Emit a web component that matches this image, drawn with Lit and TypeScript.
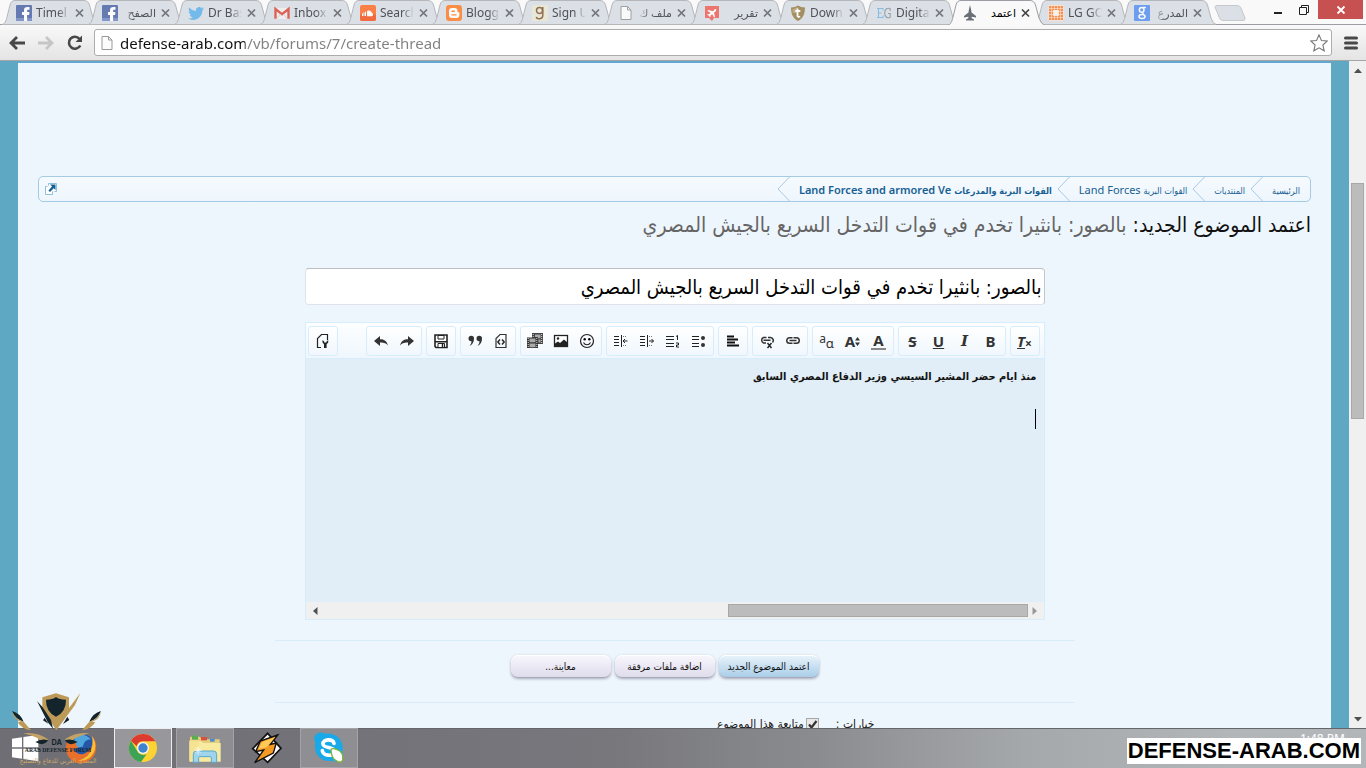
import { LitElement, html, svg, css, nothing } from "lit";
import { customElement, state } from "lit/decorators.js";
import { classMap } from "lit/directives/class-map.js";

const ic = (body: unknown, box = "0 0 16 16") => html`<svg class="ic" viewBox=${box} aria-hidden="true">${body}</svg>`;

const facebook = svg`<rect width="16" height="16" rx="1" fill="#5a70ad"/><rect y="13" width="16" height="3" fill="#7c90c5"/><path d="M8 16V10H6V7h2V5.400C8 3 9.200 2 11.400 2H13.500v2.700h-1.400c-.8 0-1 .4-1 1.100V7h2.300l-.3 3h-2v6z" fill="#fff"/>`;
const twitter = svg`<path d="M16 3.600c-.6.3-1.200.4-1.900.5.700-.4 1.200-1 1.400-1.800-.6.4-1.300.6-2 .8A3.200 3.200 0 0 0 8 6C5.200 5.900 2.800 4.600 1.200 2.600c-.9 1.500-.4 3.400 1 4.400-.5 0-1-.2-1.500-.4 0 1.600 1.100 2.900 2.600 3.200-.5.1-1 .2-1.500.1.400 1.300 1.600 2.200 3.100 2.300A6.600 6.600 0 0 1 0 13.500C5.800 17 14.400 13.700 14.400 5.300c.6-.5 1.200-1 1.600-1.700z" fill="#68b5ea"/>`;
const gmail = svg`<rect x="1" y="3" width="14" height="11" fill="#f2efef"/><path d="M1.500 13.800V4L8 9.200 14.500 4v9.800" fill="none" stroke="#dd5548" stroke-width="2.400"/><path d="M3 13.500 6.500 9M13 13.500 9.500 9" stroke="#d5cfcf"/>`;
const cloud = svg`<rect width="16" height="16" rx="2" fill="#ff7638"/><rect y="9" width="16" height="7" rx="2" fill="#f55f2c"/><path d="M7 11V6a3.200 3.200 0 0 1 5 2 1.700 1.700 0 0 1 0 3.200H7z" fill="#fff"/><path d="M2.500 8.500V11M4 7.500V11M5.500 6.800V11" stroke="#fff" stroke-width="1"/>`;
const blogger = svg`<rect width="16" height="16" rx="3" fill="#ff8636"/><path d="M3 6a3 3 0 0 1 3-3h2.500a3 3 0 0 1 3 3c0 1 .3 1.200 1 1.200s.9.400.9 1V10a3 3 0 0 1-3 3H6a3 3 0 0 1-3-3z" fill="#fff"/><path d="M6 6.200h2.300M6 9.900h4" stroke="#ff8636" stroke-width="1.400" stroke-linecap="round"/>`;
const goodreads = svg`<rect width="16" height="16" fill="#ebe8d6"/><circle cx="7.500" cy="5.500" r="3" fill="none" stroke="#8b6544" stroke-width="1.500"/><path d="M10.800 2v8.500c0 4-6 4-6.500 1.300" fill="none" stroke="#8b6544" stroke-width="1.500"/>`;
const page = svg`<path d="M3 1.500h6.500L13 5v9.500H3z" fill="#fcfcfc" stroke="#999"/><path d="M9.500 1.500V5H13" fill="none" stroke="#999"/>`;
const plane = svg`<path d="M1 1h14v12h-5l-2 3-3-3H1z" fill="#f06a62"/><path d="M4 5l5 1.300L11 4l1.300.2L12 6l-2 1.700L11 12l-1 .5-1.700-3.300-1.800 1.200V12l-.8.300L5 10.700 3.200 10l.3-.8H5L6.500 7.800 3.500 6z" fill="#fff"/>`;
const torrent = svg`<path d="M1 2.500C4 2.500 6 1.500 8 .5c2 1 4 2 7 2C15 9 13 13.500 8 16 3 13.500 1 9 1 2.500z" fill="#9d8754"/><path d="M2.500 4C5 3.600 6.500 2.800 8 2v6H2.700z" fill="#bba77a"/><path d="M7.500 3.500v7c0 1.600 1.500 1.500 2.700 1M5.300 6h5" fill="none" stroke="#fff" stroke-width="1.800"/>`;
const eg = svg`<path d="M1 3.500h6v2M1 12.500h6v-2M2.500 3.500v9M2.500 8h3" fill="none" stroke="#7eb9e4" stroke-width="1.100"/><path d="M14.200 6V3.800C11 2.300 8.700 4.500 8.700 8s2.300 5.800 5.500 4.200V8.500H12" fill="none" stroke="#8e9aa5" stroke-width="1.100"/>`;
const jet = svg`<path d="M8 0l1.200 5 .3 2.500L14 11v1.500l-4.200-.8L9.500 13l2.500 1.500v1H4v-1L6.500 13l-.3-1.300L2 12.500V11l4.500-3.500L6.800 5z" fill="#5b6068"/>`;
const grid = svg`<rect width="16" height="16" rx="3" fill="#fbe3d0"/><path d="M3 3h10v10H3z" fill="none" stroke="#f58a48" stroke-width="4"/><path d="M3.500 0v16M6.500 0v16M9.500 0v16M12.500 0v16M0 3.500h16M0 6.500h16M0 9.500h16M0 12.500h16" stroke="#fbe3d0" stroke-width=".6"/><path d="M5.500 5.500h5v5h-5z" fill="#fff2e6"/>`;
const google = svg`<rect width="16" height="16" rx="1" fill="#6296f0"/><circle cx="7.700" cy="4.900" r="2.300" fill="none" stroke="#fff" stroke-width="1.500"/><ellipse cx="8" cy="11.400" rx="3" ry="2" fill="none" stroke="#fff" stroke-width="1.500"/><path d="M9 2.500h2.800M8 7l1.700 2.500" stroke="#fff" stroke-width="1.300"/>`;

interface Tab { t: string; i: unknown; rtl?: boolean; active?: boolean }
const tabs: Tab[] = [
  { t: "Timel", i: facebook }, { t: "الصفح", i: facebook, rtl: true }, { t: "Dr Bas", i: twitter },
  { t: "Inbox", i: gmail }, { t: "Search", i: cloud }, { t: "Blogg", i: blogger },
  { t: "Sign U", i: goodreads }, { t: "ملف ك", i: page, rtl: true }, { t: "تقرير", i: plane, rtl: true },
  { t: "Down", i: torrent }, { t: "Digita", i: eg }, { t: "اعتمد", i: jet, rtl: true, active: true },
  { t: "LG GO", i: grid }, { t: "المدرع", i: google, rtl: true },
];

const g = {
  settings: svg`<path d="M6 14.500H2.500V5.500l4-4h6V7" fill="none" stroke="#222" stroke-width="1.200"/><path d="M7.500 7v2.500L9 11.200V15h2.600v-3.800L13.200 9.500V7l-1.700 1.600v.9H9.200v-.9z" fill="#222"/>`,
  undo: svg`<path d="M1 8l6-5v3.200c4 0 7 1.800 8 6.300-2-2.500-4.500-3.200-8-3V13z" fill="#333"/>`,
  redo: svg`<path d="M15 8L9 3v3.200C5 6.200 2 8 1 12.500c2-2.500 4.500-3.200 8-3V13z" fill="#333"/>`,
  save: svg`<path d="M2 2h12v12.500H3L2 13.500z" fill="#fff" stroke="#222" stroke-width="1.600"/><path d="M5 2.500h6V6H5z" fill="#fff" stroke="#222"/><path d="M2 8h12v1.500H2z" fill="#222"/><path d="M5 14v-3.500h6.500V14" fill="#fff" stroke="#222"/><path d="M9.500 11v3" stroke="#222" stroke-width="1.500"/>`,
  quote: svg`<path d="M1.500 5.500a2.700 2.700 0 1 1 5.500 0c0 3.500-1.500 6-4.500 7.500 1.300-1.500 2-3 2-4.700-1.800.2-3-1-3-2.800zM9.500 5.500a2.700 2.700 0 1 1 5.500 0c0 3.500-1.500 6-4.500 7.500 1.300-1.500 2-3 2-4.700-1.800.2-3-1-3-2.800z" fill="#333"/>`,
  code: svg`<path d="M3 14.500v-9l4-4h6v13z" fill="none" stroke="#333" stroke-width="1.200"/><path d="M7 6.500L4.800 9 7 11.500M9 6.500L11.200 9 9 11.500" fill="none" stroke="#222" stroke-width="1.400"/>`,
  media: svg`<path d="M5 0h11v11H5z" fill="#444"/><path d="M0 4.500h11V15H0z" fill="#333"/><path d="M2.500 5.500h6v3.700h-6zM2.500 10.500h6v3.700h-6zM8 1.500h5.500v3.700H11V4H8zM11.500 6.500h2v3h-2z" fill="#aaa"/><path d="M1.200 5v10M9.800 5v10M14.700 1v10M6.200 1v3" stroke="#ddd" stroke-dasharray="1 1"/>`,
  image: svg`<rect x="1.500" y="2.500" width="13" height="11" fill="#fff" stroke="#222" stroke-width="1.300"/><path d="M2 13v-2.500l3-2 2 1.500 4-3.500 3.500 3V13z" fill="#222"/><circle cx="5" cy="5.500" r="1.200" fill="#222"/>`,
  smile: svg`<circle cx="8" cy="8" r="6.500" fill="none" stroke="#222" stroke-width="1.200"/><circle cx="5.700" cy="6.300" r="1.200"/><circle cx="10.300" cy="6.300" r="1.200"/><path d="M4.500 9.500c1.500 3 5.500 3 7 0" fill="none" stroke="#222" stroke-width="1.100"/>`,
  outdent: svg`<path d="M1 3.500h5M1 6.500h5M1 9.500h5M1 12.500h5M8.500 2v12" stroke="#222"/><path d="M10 3.500h4M10 12.500h4" stroke="#777" stroke-dasharray="1 1"/><path d="M14.500 8H10M12 6L10 8l2 2" fill="none" stroke="#222"/>`,
  indent: svg`<path d="M1 3.500h5M1 6.500h5M1 9.500h5M1 12.500h5M8.500 2v12" stroke="#222"/><path d="M10 3.500h4M10 12.500h4" stroke="#777" stroke-dasharray="1 1"/><path d="M10 8h4.500M12.500 6l2 2-2 2" fill="none" stroke="#222"/>`,
  ordered: svg`<path d="M1 3.500h8M1 6.500h8M1 10.500h8M1 13.500h8" stroke="#222" stroke-width="1.200"/><path d="M11 3.500l1.500-1V7M11 10h2.500v2H11.500v2H14" fill="none" stroke="#222"/>`,
  bullets: svg`<path d="M1 3.500h7M1 6.500h7M1 10.500h7M1 13.500h7" stroke="#222" stroke-width="1.200"/><circle cx="12" cy="5" r="2" fill="#333"/><circle cx="12" cy="12" r="2" fill="#333"/>`,
  align: svg`<path d="M2 3.500h7M2 6.500h11M2 9.500h8M2 12.500h12" stroke="#111" stroke-width="1.800"/>`,
  unlink: svg`<path d="M7 10H4.500a3 3 0 0 1 0-5.500H7.500M9 4.500h2.500a3 3 0 0 1 2 5M4.500 7.300h7" fill="none" stroke="#333" stroke-width="1.500"/><path d="M8.500 10l4 5M12.500 10l-4 5" stroke="#222" stroke-width="1.400"/>`,
  link: svg`<path d="M7.500 4.800h-3a2.700 2.700 0 0 0 0 5.500h3M8.500 4.800h3a2.700 2.700 0 0 1 0 5.500h-3M4.500 7.500h7" fill="none" stroke="#333" stroke-width="1.500"/>`,
};

interface Tool { n: string; i?: unknown; l?: string; c?: string }
const groups: Tool[][] = [
  [{ n: "تراجع", i: g.undo }, { n: "إعادة", i: g.redo }],
  [{ n: "حفظ", i: g.save }],
  [{ n: "اقتباس", i: g.quote }, { n: "كود", i: g.code }],
  [{ n: "وسائط", i: g.media }, { n: "صورة", i: g.image }, { n: "ابتسامات", i: g.smile }],
  [{ n: "تقليل المسافة", i: g.outdent }, { n: "زيادة المسافة", i: g.indent }, { n: "قائمة رقمية", i: g.ordered }, { n: "قائمة نقطية", i: g.bullets }],
  [{ n: "محاذاة", i: g.align }],
  [{ n: "إزالة الرابط", i: g.unlink }, { n: "رابط", i: g.link }],
  [{ n: "الخط", l: "a", c: "family" }, { n: "الحجم", l: "A", c: "size" }, { n: "اللون", l: "A", c: "color" }],
  [{ n: "يتوسطه خط", l: "S", c: "strike" }, { n: "تسطير", l: "U", c: "under" }, { n: "مائل", l: "I", c: "ital" }, { n: "عريض", l: "B", c: "bold" }],
  [{ n: "إزالة التنسيق", l: "T", c: "clear" }],
];

const toolSuffix: Record<string, unknown> = {
  family: html`<small>ɑ</small>`,
  size: html`<svg width="5" height="9" viewBox="0 0 5 9"><path d="M2.500 0L5 3.500H0zM2.500 9L5 5.500H0z" fill="#333"/></svg>`,
  clear: html`<small>×</small>`,
};

interface Task { n: string; open?: boolean; bright?: boolean; box: string; i: unknown }
const tasks: Task[] = [
  { n: "Firefox", box: "195 156 96 96", i: svg`<circle cx="245" cy="202" r="40" fill="#2456a6"/><path d="M225 170q25-14 48 8-20 0-25 22l-30 5z" fill="#4fa5de"/><path d="M207 172q-18 28-2 58 22 28 56 16 32-16 27-56-4-14-12-22 6 26-8 42-18 20-38 8-10-6-10-14 8 4 14-2-10-10-4-20-10 0-14 4z" fill="#e8702a"/><path d="M276 168q18 26 4 52-16 26-46 22 36-10 42-38 4-18 0-36z" fill="#f9c23c"/>` },
  { n: "Chrome", open: true, bright: true, box: "381 156 96 96", i: svg`<circle cx="429" cy="204" r="42" fill="#fbd433"/><path d="M393 182A42 42 0 0 1 466 184H429a20 20 0 0 0-19 15z" fill="#de3b30"/><path d="M393 182A42 42 0 0 0 423 246L440 222a20 20 0 0 1-29-10z" fill="#3ba353"/><circle cx="429" cy="204" r="18" fill="#f4f7fa"/><circle cx="429" cy="204" r="14" fill="#3e82d0"/>` },
  { n: "Explorer", open: true, box: "567 156 96 96", i: svg`<path d="M570 170h30l5 8h54v62h-89z" fill="#e5cf7c"/><path d="M576 167h18v12h-18z" fill="#5cab55"/><path d="M603 171h18v10h-18z" fill="#d9503f"/><path d="M630 177h14v8h-14z" fill="#4b8ed0"/><path d="M568 184h36l6 5h52v56h-94z" fill="#f8ea9e"/><path d="M568 180h28v58h-28z" fill="#f3df8b" opacity=".7"/><path d="M580 247v-24q0-10 10-10h50q10 0 10 10v24h-16v-14q0-3-3-3h-32q-3 0-3 3v14z" fill="#9ed4ec" stroke="#5aa8cf" stroke-width="3"/><path d="M594 199v25M583 211h23M586 203l16 16M602 203l-16 16" stroke="#fff" stroke-width="2"/>` },
  { n: "Winamp", box: "753 156 96 96", i: svg`<path d="M803 160l40 45-40 42-45-41z" fill="#fff" stroke="#111" stroke-width="5"/><path d="M833 165l-52 18-14 32 24-5-27 38 56-29 9-30-18 4z" fill="#f59a22" stroke="#111" stroke-width="4"/><path d="M826 171l-40 15-11 22 25-6z" fill="#ffc95a"/>` },
  { n: "Skype", open: true, box: "939 156 96 96", i: svg`<path d="M946 188c-12-20 10-38 28-27 35-6 60 22 53 52 10 22-10 39-28 29-36 7-60-20-53-54z" fill="#18a9e8"/><path d="M1002 190c-3-14-34-14-33 2 1 15 35 6 34 23-2 16-35 13-36-3" fill="none" stroke="#fff" stroke-width="11" stroke-linecap="round"/><path d="M993 208q4-5 18 1 20 6 17 31-4 10-16 4-19-7-19-36z" fill="#fff" stroke="#7fb53a" stroke-width="4"/>` },
];

@customElement("app-root")
export class AppRoot extends LitElement {
  @state() private follow = true;

  static styles = css`
    :host { --arabic: "DejaVu Sans Condensed", "DejaVu Sans", sans-serif; display: flex; flex-direction: column; height: 100vh; overflow: hidden; position: relative; font-family: "Noto Sans", "DejaVu Sans", sans-serif; background: #f8f8f8; }
    *, *::before, *::after { box-sizing: border-box; }
    button, input, textarea { font: inherit; margin: 0; border: 0; padding: 0; background: none; color: inherit; outline: none; }
    a { color: inherit; text-decoration: none; }
    svg { display: block; }
    .ic { width: 16px; height: 16px; flex: none; }

    .strip { display: flex; height: 25px; flex: none; padding-left: 2px; border-bottom: 1px solid #9b9ea2; background: #f9f9f9; }
    .tab { display: grid; width: 96px; height: 25px; margin-right: -10px; flex: none; }
    .tab > * { grid-area: 1 / 1; }
    .shape { width: 96px; height: 25px; }
    .shape path { fill: #dbdfe6; stroke: #b5b7ba; }
    .tab.active { z-index: 1; }
    .tab.active .shape path { fill: #f9f9f9; stroke: #9b9ea2; }
    .face { display: flex; align-items: center; padding: 0 14px; height: 25px; }
    .face .ic { opacity: .9; }
    .label { flex: none; width: 34px; margin: 0 5px 0 4px; overflow: hidden; white-space: nowrap; font-size: 12px; line-height: 18px; color: #505357; mask-image: linear-gradient(to right, #000 65%, transparent); }
    .label.rtl { font-size: 11px; mask-image: linear-gradient(to left, #000 65%, transparent); }
    .active .label { color: #000; mask-image: none; }
    .x, .x svg { width: 9px; height: 16px; }
    .newtab { width: 32px; height: 16px; margin: 5px 0 0 8px; }
    .wins { display: flex; margin-left: auto; padding-right: 3px; }
    .wins button { width: 26px; height: 19px; display: grid; place-items: center; }
    .wins .close { width: 45px; background: #c75050; margin-left: 1px; }

    .bar { display: flex; align-items: center; flex: none; height: 36px; padding: 0 8px 0 7px; background: linear-gradient(#f9f9f9, #e4e4e4); border-bottom: 1px solid #a5a5a5; }
    .bar > button { width: 20px; height: 20px; display: grid; place-items: center; margin-right: 9px; }
    .bar > .menu { width: 14px; margin: 0 0 0 12px; }
    .omni { flex: 1; display: flex; align-items: center; height: 27px; padding: 0 3px 0 4px; border: 1px solid #acacac; border-radius: 3px; background: #fff; }
    .omni input { flex: 1; min-width: 0; margin: 0 5px; height: 24px; font-size: 15px; color: transparent; background: linear-gradient(to right, #111 125px, #808080 125px); background-clip: text; -webkit-background-clip: text; }
    .star { width: 18px; height: 18px; }

    .view { flex: 1; min-height: 0; display: flex; background: #5fa8c3; }
    main { flex: 1; min-width: 0; margin: 0 18px; padding: 113px 20px 0; overflow: hidden; background: #eef6fd; border-top: 2px solid #62a6d2; }
    .scroll { width: 17px; background: #f0f0f0; display: flex; flex-direction: column; align-items: center; padding: 7px 0 6px; }
    .track { flex: 1; padding-top: 110px; }
    .thumb { width: 13px; height: 236px; background: #bcbcbc; border: 1px solid #a8a8a8; }

    .crumbs { display: flex; align-items: center; justify-content: space-between; height: 26px; direction: rtl; padding: 0 10px 0 5px; border: 1px solid #a5cae4; border-radius: 5px; background: linear-gradient(#f5fafe, #eef6fd); font-size: 11px; color: #176093; }
    .crumbs ol { display: flex; list-style: none; margin: 0; padding: 0; }
    .crumbs li { display: flex; align-items: center; gap: 9px; margin-left: 5px; height: 24px; }
    .crumbs li svg { width: 13px; height: 24px; }
    .crumbs a { white-space: nowrap; }
    .crumbs .ar { font-family: var(--arabic); font-size: 9px; }
    .crumbs .here { font-weight: 600; }

    h1 { direction: rtl; margin: 9px 0 28px; font: 400 21px/29px var(--arabic); color: #111; white-space: nowrap; }
    h1 em { font-style: normal; color: #656565; }
    form { width: 100%; max-width: 800px; margin: 0 auto; }
    .main { padding: 0 30px 20px; border-bottom: 1px solid #d7edfc; }
    .title { display: block; direction: rtl; width: 100%; height: 37px; padding: 0 2px; font: 20px var(--arabic); color: #000; background: #fff; border: 1px solid #e0e4e8; border-top-color: #bcc0c4; border-right-color: #c4c6ca; border-radius: 4px; }
    .editor { margin-top: 17px; border: 1px solid #d7edfc; background: #e1eef7; }
    .tools { display: flex; gap: 4px; padding: 3px 4px 3px 2px; height: 36px; background: linear-gradient(#fdfeff, #eff7fd); border-bottom: 1px solid #d7edfc; }
    .group { display: flex; padding: 1px; border: 1px solid #d7edfc; border-radius: 3px; height: 30px; background: linear-gradient(#fff, #f0f7fd); }
    .group:first-child { margin-right: auto; }
    .group button { width: 26px; display: flex; align-items: center; justify-content: center; font: 700 15px/18px "Noto Sans", sans-serif; color: #333; }
    .group .under { text-decoration: underline; }
    .group .strike { text-decoration: line-through; }
    .group .ital { font-style: italic; font-family: "DejaVu Serif", serif; }
    .group .clear span { font-style: italic; text-decoration: underline; }
    .group .clear small { font-size: 12px; padding-top: 6px; }
    .group .color span { border-bottom: 2px solid #888; line-height: 15px; padding: 0 2px; }
    .group .family { font-size: 12px; font-weight: 400; }
    .family span { padding-bottom: 5px; }
    .family small { font-size: 13px; padding-top: 4px; }
    .body { height: 243px; direction: rtl; padding: 8px 7px; }
    .body textarea { display: block; width: 100%; height: 20px; resize: none; overflow: hidden; white-space: nowrap; font: 700 11px/20px var(--arabic); color: #141414; }
    .caret { width: 1px; height: 20px; margin: 22px 1px 0; background: #000; }
    .hbar { display: flex; align-items: center; justify-content: space-between; height: 17px; padding: 0 6px; background: #f0f0f0; }
    .hbar i { width: 300px; height: 13px; margin: 0 4px 0 auto; background: #bcbcbc; border: 1px solid #a8a8a8; }
    .actions { display: flex; justify-content: center; direction: rtl; gap: 4px; padding: 14px 20px 24px 0; border-bottom: 1px solid #d7edfc; }
    .actions button { width: 100px; height: 23px; white-space: nowrap; font: 10px/20px var(--arabic); color: #111; border-radius: 7px; border-top: 1px solid #fff; border-bottom: 1px solid #a9a8bb; background: linear-gradient(#f8f6fc, #dfdcec); box-shadow: 0 1px 3px rgba(60, 60, 90, .4); }
    .actions .primary { background: linear-gradient(#e7f2fa, #a9cde8); }
    .opts { display: flex; direction: rtl; padding: 11px 200px 0 0; gap: 17px; font: 12px/20px var(--arabic); color: #222; }
    .opts label { display: flex; align-items: center; gap: 2px; }
    .opts input { width: 13px; height: 13px; appearance: none; border: 1px solid #a8a8a8; background: linear-gradient(#f2f2f2, #dcdcdc); }
    .opts input:checked { background: url("data:image/svg+xml,%3Csvg xmlns='http://www.w3.org/2000/svg' viewBox='0 0 11 11'%3E%3Cpath d='M2 5.500l2.500 3L9.500 2' fill='none' stroke='%23333' stroke-width='2.200'/%3E%3C/svg%3E") #e8e8e8; }

    .taskbar { display: flex; gap: 4px; flex: none; height: 40px; border-top: 1px solid #66656b; background: linear-gradient(to right, #6f6e74, #747379 28%, #77777c 45%, #8b8c90 60%, #a5a8ab 75%, #b3b6b9 90%); }
    .taskbar button { width: 58px; height: 40px; margin-top: -1px; display: grid; place-items: center; border: 1px solid transparent; }
    .taskbar .start { width: 48px; }
    .taskbar .open { background: rgba(255, 255, 255, .2); border-color: #a3a3a8; }
    .taskbar .bright { background: rgba(255, 255, 255, .28); border-color: #eee; }
    .taskbar svg { width: 32px; height: 32px; }
    .clock { margin-left: auto; padding: 1px 21px 0 0; font-size: 12px; line-height: 18px; color: #fff; }
    .stamp { position: absolute; right: 5px; bottom: 4px; padding: 0 1px; background: #fff; color: #000; font: 700 22px/26px "Liberation Sans", sans-serif; }
    .badge { position: absolute; left: 10px; bottom: 0; width: 96px; height: 78px; pointer-events: none; }
  `;

  private renderTab(t: Tab) {
    const active = !!t.active;
    const rtl = !!t.rtl;
    return html`<div class=${classMap({ tab: true, active })} role="tab" aria-selected=${active}>
      <svg class="shape" viewBox="0 0 96 25"><path d=${active ? "M-1 25.500C3 25 4 21 5 17L8 5Q9 .5 13 .5H82Q86 .5 87.500 5L91 18Q93 24 97 25.500" : "M0 24.500C3 24 4 21 5 17L8 5Q9 .5 13 .5H82Q86 .5 87.500 5L91 18Q93 24 96 24.500z"}/></svg>
      <div class="face">${ic(t.i)}<span class=${classMap({ label: true, rtl })} dir=${rtl ? "rtl" : "ltr"}>${t.t}</span>
        <button class="x" aria-label="Close tab"><svg viewBox="0 0 9 16"><path d="M1 4.500l7 7M8 4.500l-7 7" stroke=${active ? "#444" : "#72757a"} stroke-width="1.700"/></svg></button></div>
    </div>`;
  }

  private renderTool(b: Tool) {
    if (b.i) return html`<button type="button" aria-label=${b.n}>${ic(b.i)}</button>`;
    return html`<button type="button" class=${b.c ?? ""} aria-label=${b.n}><span>${b.l}</span>${toolSuffix[b.c ?? ""] ?? nothing}</button>`;
  }

  render() {
    const sep = html`<svg viewBox="0 0 13 24"><path d="M12.500 0L1 12l11.500 12" fill="none" stroke="#a5cae4"/></svg>`;
    return html`
      <div class="strip" role="tablist">
        ${tabs.map((t) => this.renderTab(t))}
        <button class="newtab" aria-label="New tab"><svg viewBox="0 0 32 16"><path d="M1 2Q1 .5 3 .5H23Q26 .5 27 3L31 13Q31.500 15.500 29 15.500H9Q6.500 15.500 5.500 13z" fill="#dbdfe6" stroke="#c6c8cb"/></svg></button>
        <div class="wins">
          <button aria-label="Minimize"><svg width="10" height="12"><path d="M1 9h8" stroke="#222" stroke-width="2"/></svg></button>
          <button aria-label="Restore"><svg width="12" height="12"><path d="M1.500 3.500h7v7h-7zM3.500 3V1.500h7v7H9" fill="none" stroke="#222"/></svg></button>
          <button class="close" aria-label="Close"><svg width="10" height="10"><path d="M1.500 1.500l7 7M8.500 1.500l-7 7" stroke="#fff" stroke-width="1.800"/></svg></button>
        </div>
      </div>
      <div class="bar">
        <button aria-label="Back"><svg width="18" height="16"><path d="M17 8H4M9 2L3 8l6 6" fill="none" stroke="#484848" stroke-width="2.800"/></svg></button>
        <button aria-label="Forward"><svg width="18" height="16"><path d="M1 8h13M9 2l6 6-6 6" fill="none" stroke="#c6c6c6" stroke-width="2.800"/></svg></button>
        <button aria-label="Reload"><svg width="18" height="18"><path d="M14.300 11.500A6 6 0 1 1 13.500 4.800" fill="none" stroke="#484848" stroke-width="2.600"/><path d="M16 1.500V8H9.500z" fill="#484848"/></svg></button>
        <div class="omni">${ic(page)}<input aria-label="Address" .value=${"defense-arab.com/vb/forums/7/create-thread"}>
          <button class="star" aria-label="Bookmark"><svg viewBox="0 0 20 20"><path d="M10 1l2.700 6.200 6.500.6-4.900 4.400 1.500 6.500L10 15.300l-5.800 3.400 1.500-6.500L.8 7.800l6.500-.6z" fill="#fff" stroke="#777" stroke-width="1.200"/></svg></button></div>
        <button class="menu" aria-label="Menu"><svg width="14" height="14"><path d="M1.500 2h11M1.500 7h11M1.500 12h11" stroke="#484848" stroke-width="3" stroke-linecap="round"/></svg></button>
      </div>
      <div class="view">
        <main>
          <nav class="crumbs">
            <ol>
              <li><a href="#"><span class="ar">الرئيسية</span></a>${sep}</li>
              <li><a href="#"><span class="ar">المنتديات</span></a>${sep}</li>
              <li><a href="#"><span class="ar">القوات البرية</span> Land Forces</a>${sep}</li>
              <li><a href="#" class="here"><span class="ar">القوات البرية والمدرعات</span> Land Forces and armored Ve</a>${sep}</li>
            </ol>
            <a href="#" aria-label="فتح القائمة"><svg width="14" height="14"><path d="M4.500 3.500v-2h8v8h-2M3.500 4.500h-2v8h7v-3" fill="#fff" stroke="#8fbfdd"/><path d="M6 2.500h5.500V8L9.700 6.300 6 10 4.500 8.500 8 4.500z" fill="#176093"/></svg></a>
          </nav>
          <h1>اعتمد الموضوع الجديد: <em>بالصور: بانثيرا تخدم في قوات التدخل السريع بالجيش المصري</em></h1>
          <form @submit=${(e: Event) => e.preventDefault()}>
            <div class="main">
              <input class="title" aria-label="عنوان الموضوع" .value=${"بالصور: بانثيرا تخدم في قوات التدخل السريع بالجيش المصري"}>
              <div class="editor">
                <div class="tools" role="toolbar">
                  <div class="group"><button type="button" aria-label="المحرر">${ic(g.settings)}</button></div>
                  ${groups.map((gr) => html`<div class="group">${gr.map((b) => this.renderTool(b))}</div>`)}
                </div>
                <div class="body">
                  <textarea aria-label="نص الموضوع" rows="1" .value=${"منذ ايام حضر المشير السيسي وزير الدفاع المصري السابق"}></textarea>
                  <div class="caret"></div>
                </div>
                <div class="hbar">
                  <svg width="6" height="8"><path d="M5.500 0v8L1 4z" fill="#505050"/></svg><i></i>
                  <svg width="6" height="8"><path d="M.5 0v8L5 4z" fill="#999"/></svg>
                </div>
              </div>
            </div>
            <div class="actions">
              <button type="submit" class="primary">اعتمد الموضوع الجديد</button>
              <button type="button">اضافة ملفات مرفقة</button>
              <button type="button">معاينة...</button>
            </div>
            <div class="opts"><span>خيارات :</span>
              <label><input type="checkbox" .checked=${this.follow} @change=${(e: Event) => (this.follow = (e.target as HTMLInputElement).checked)}>متابعة هذا الموضوع</label></div>
          </form>
        </main>
        <div class="scroll">
          <svg width="8" height="5"><path d="M0 5l4-4.500L8 5z" fill="#505050"/></svg>
          <div class="track"><div class="thumb"></div></div>
          <svg width="8" height="5"><path d="M0 0l4 4.500L8 0z" fill="#505050"/></svg>
        </div>
      </div>
      <footer class="taskbar">
        <button class="start" aria-label="Start"><svg viewBox="24 156 96 96"><path d="M36 176l30-4v30H36zM70 171l45-6v37H70zM36 206h30v30l-30-4zM70 206h45v38l-45-7z" fill="#fff"/></svg></button>
        ${tasks.map((t) => html`<button class=${classMap({ open: !!t.open, bright: !!t.bright })} aria-label=${t.n}><svg viewBox=${t.box}>${t.i}</svg></button>`)}
        <span class="clock">1:48 PM</span>
      </footer>
      <svg class="badge" viewBox="30 30 288 234">
        <path d="M168 40l39 12v32l34-45-16 36-56 76-32-48-10-19V52z" fill="#bd9a57"/>
        <path d="M138 59q20 0 30-8 10 8 30 8 1 36-30 51-31-15-30-51z" fill="#13242c"/>
        <path d="M111 63l17 19 25 38 6 26-16-20zM134 113l-5 8 16 10zM202 110l6 10-19 12z" fill="#13242c"/>
        <path d="M36 93q24 6 35 32-24-6-35-32zM303 93q-24 6-35 32 24-6 35-32z" fill="#13242c"/>
        <path d="M36 93q8 24 35 32l22 26q-26-2-40-24 4-2 10-1-24-8-27-33zM303 93q-8 24-35 32l-22 26q26-2 40-24-4-2-10-1 24-8 27-33z" fill="#bd9a57"/>
        <path d="M70 160q40-6 74 18l-14 14q-12-22-60-32zM269 160q-40-6-74 18l14 14q12-22 60-32z" fill="#c3a263"/>
        <path d="M106 186q20-12 38-5-12 20-38 5zM233 186q-20-12-38-5 12 20 38 5z" fill="#13242c"/>
        <g text-anchor="middle"><text x="170" y="194" font-size="22" font-weight="700" font-family="Inter, sans-serif" fill="#13242c">DA</text>
        <text x="174" y="217" font-size="17" font-weight="700" font-family="Liberation Serif, serif" fill="#13242c">ARAB DEFENSE FORUM</text>
        <text x="174" y="248" font-size="20" font-family="DejaVu Sans Condensed, DejaVu Sans, sans-serif" fill="#c9a869">المنتدى العربي للدفاع والتسليح</text></g>
      </svg>
      <div class="stamp">DEFENSE-ARAB.COM</div>`;
  }
}
